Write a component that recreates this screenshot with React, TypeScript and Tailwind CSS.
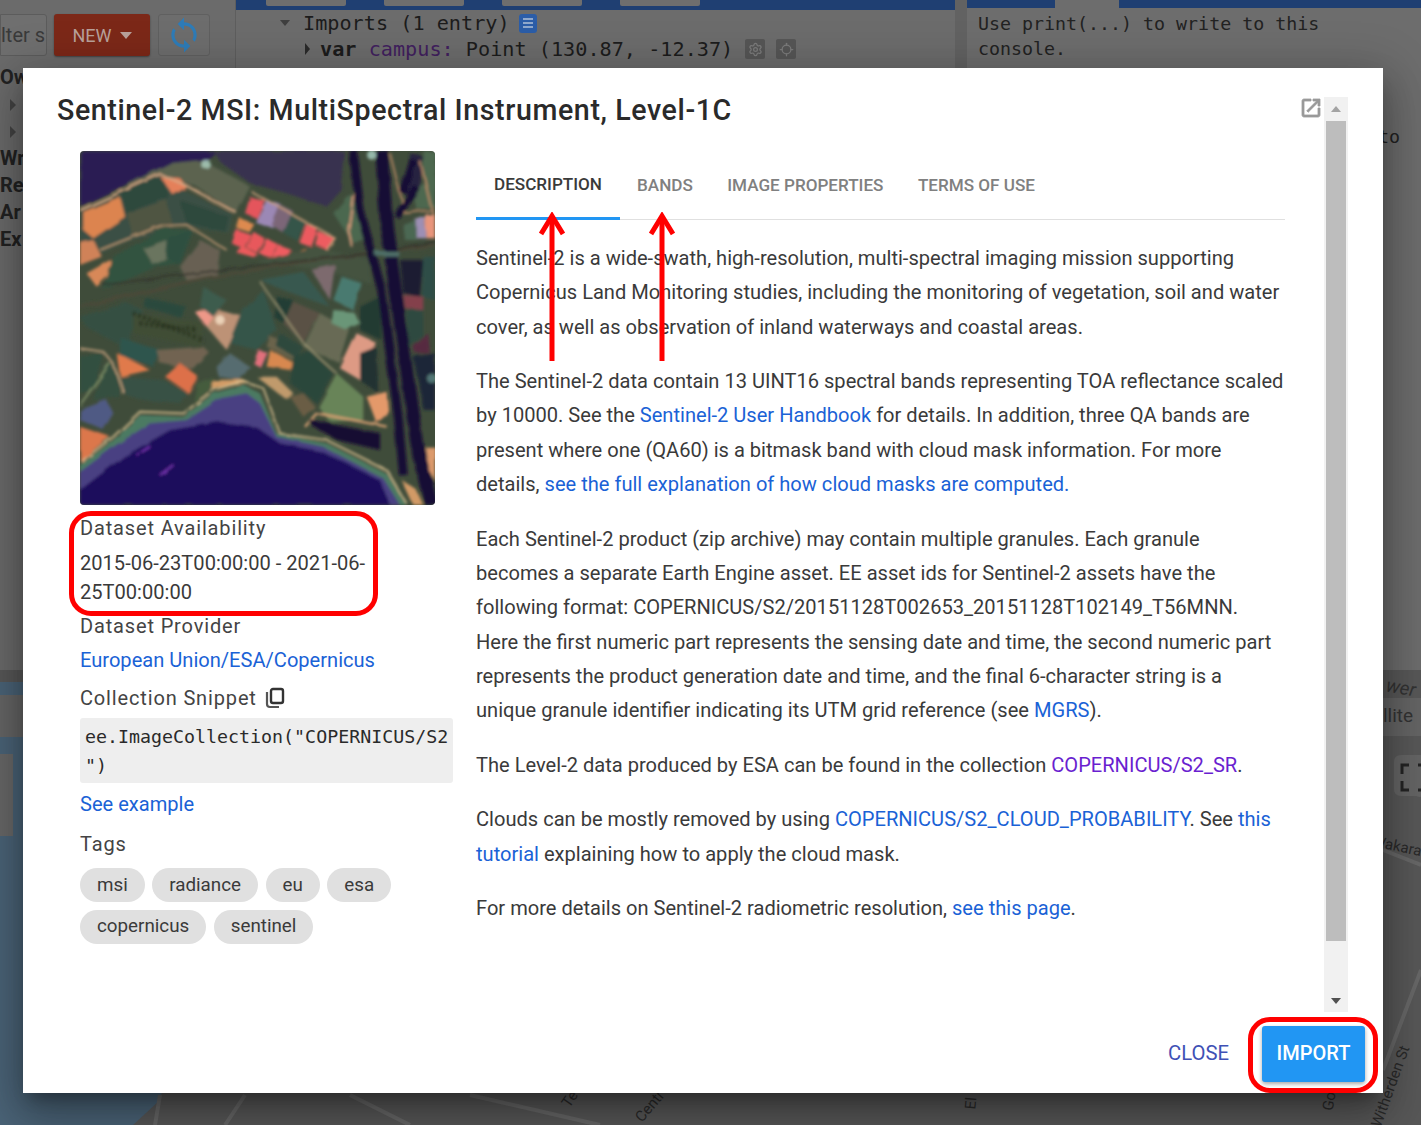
import { Settings, Locate } from 'lucide-react';

const fields: [string, string][] = [
  ['#2a1b52', '30,3 440,3 400,40 300,40 200,90 30,170'],
  ['#5c6350', '300,40 400,30 450,60 540,110 500,190 380,110 270,70 150,120 200,90'],
  ['#38304f', '430,3 825,3 815,120 770,170 650,130 540,100 450,35'],
  ['#3a5044', '30,180 270,75 350,125 490,195 480,250 330,225 160,280 30,340'],
  ['#2f4a3e', '155,130 270,80 300,140 170,190'],
  ['#4f5443', '170,190 290,150 310,230 190,260'],
  ['#2f483d', '330,150 480,200 470,245 350,220'],
  ['#dc8450', '40,185 150,140 165,200 70,265 40,240'],
  ['#e4805a', '270,80 330,85 350,110 310,135'],
  ['#d08258', '30,280 70,270 95,320 30,345'],
  ['#d88858', '50,370 120,330 140,355 80,410'],
  ['#335241', '130,320 280,235 370,240 330,340 260,350 100,420'],
  ['#6b755f', '220,295 290,270 295,325 250,345'],
  ['#2d4f41', '290,270 370,235 330,345 285,320'],
  ['#686153', '330,350 390,270 450,300 440,380 350,390'],
  ['#e4545c', '540,140 585,150 560,205 525,190'],
  ['#9b88b5', '590,150 635,165 610,235 555,215'],
  ['#7c6678', '630,165 670,185 640,250 605,225'],
  ['#e9565c', '500,240 545,255 525,300 485,280'],
  ['#e8585c', '550,245 585,265 560,310 530,295'],
  ['#ee5a5e', '590,265 625,285 600,320 565,310'],
  ['#ec5a5c', '520,290 565,315 555,325 500,310'],
  ['#ee5c60', '625,285 665,300 640,330 605,320'],
  ['#ec5a5e', '705,220 745,235 725,290 685,275'],
  ['#ee5c60', '745,245 795,265 770,300 735,285'],
  ['#345448', '665,190 705,215 680,270 640,250'],
  ['#dd8a50', '510,205 550,220 535,245 500,235'],
  ['#e88a50', '655,320 700,295 760,305 680,335'],
  ['#445341', '560,335 730,290 900,330 900,400 760,360'],
  ['#7d6a6e', '725,360 795,345 780,450'],
  ['#4a7a6f', '815,380 875,400 850,480 790,450'],
  ['#38594f', '570,390 700,365 780,470 640,420'],
  ['#213e34', '620,440 670,450 640,520 610,500'],
  ['#5a5145', '670,455 750,490 700,580 640,520'],
  ['#676b54', '750,490 840,540 810,640 700,590'],
  ['#6a9678', '790,480 850,485 870,520 830,540 785,520'],
  ['#dd9a84', '860,550 915,575 870,690 810,655'],
  ['#213a33', '870,470 930,440 935,570 870,540'],
  ['#213131', '870,610 920,590 925,730 870,690'],
  ['#345043', '30,500 170,460 220,480 160,590 50,530'],
  ['#2b4a3e', '225,440 350,470 330,500 220,470'],
  ['#404d36', '190,490 400,520 390,590 190,550'],
  ['#ee9888', '375,485 450,480 445,530 410,530'],
  ['#bd9276', '445,480 520,500 470,600 410,530'],
  ['#365449', '520,480 580,420 620,540 560,600 480,580'],
  ['#2f554d', '150,560 270,600 250,650 150,620'],
  ['#3d5b4d', '400,410 470,450 430,500 390,470'],
  ['#716451', '260,600 400,590 420,610 370,660 270,640'],
  ['#dd7048', '285,680 330,640 385,680 355,730'],
  ['#e07a4c', '140,610 240,660 150,680'],
  ['#395145', '150,680 280,690 350,730 330,760 220,750 160,730'],
  ['#566c70', '440,650 480,610 540,650 510,690 445,680'],
  ['#e2707c', '565,600 590,605 570,650 550,640'],
  ['#d88850', '600,600 675,640 660,660 590,650'],
  ['#6b644b', '600,560 690,590 670,630 590,590'],
  ['#2e4a3e', '630,550 700,590 680,625 620,590'],
  ['#2a463b', '670,620 720,600 790,670 740,760 660,700'],
  ['#c09a6c', '560,680 620,680 670,730 650,750'],
  ['#6b5d44', '660,740 700,730 735,770 700,800'],
  ['#d29c66', '425,690 520,690 540,700 425,715'],
  ['#445b3e', '380,700 430,680 420,720 370,760'],
  ['#688458', '800,670 880,740 880,810 780,815 745,770'],
  ['#e4996a', '890,740 950,725 955,790 920,820'],
  ['#314f3f', '30,620 100,610 70,720 30,730'],
  ['#505a84', '30,780 110,750 130,790 100,840 30,810'],
  ['#344f3f', '100,650 135,640 150,740 70,750'],
  ['#dc774c', '30,830 120,860 60,910 40,940 30,930'],
  ['#1a1a32', '990,330 1060,330 1050,440 1000,430'],
  ['#2e4d47', '1060,320 1095,320 1095,450 1055,440'],
  ['#84404c', '1000,435 1060,440 1060,480 1005,475'],
  ['#2d4941', '1010,480 1060,480 1060,560 1020,590'],
  ['#562a40', '1030,590 1075,550 1080,610 1035,610'],
  ['#1b2638', '1030,620 1095,610 1095,780 1060,780'],
  ['#9d8fb4', '1035,210 1065,200 1070,265 1040,265'],
  ['#e8957c', '1065,195 1095,190 1095,265 1070,265'],
  ['#4b6753', '1000,225 1040,210 1040,270 1005,270'],
  ['#4b684f', '840,130 900,260 850,280 790,190 830,140'],
  ['#25203f', '1020,10 1060,20 1050,110 1010,130'],
  ['#4d684f', '1060,3 1095,3 1095,170 1040,180 1030,130 1060,100'],
  ['#dc9a6c', '1065,890 1095,890 1095,990 1075,960'],
  ['#d29a66', '995,990 1040,1020 1060,1065 1030,1065'],
];

const lines: [string, number, string][] = [
  ['#d8a884', 6, 'M30,180 L270,72 L345,105 L500,190'],
  ['#bc9672', 5, 'M90,300 L270,228 L350,225 L470,300'],
  ['#c79c78', 5, 'M545,125 L795,265 L770,300'],
  ['#4c4838', 9, 'M30,470 L400,385 L700,335 L1095,285'],
  ['#33332a', 5, 'M100,405 L530,350 L900,310 L1095,275'],
  ['#a69e7a', 4, 'M570,395 L700,580 L800,670'],
  ['#cca682', 5, 'M30,595 L100,605 L130,640 L160,730'],
  ['#84956a', 5, 'M30,765 L120,640'],
  ['#d8c090', 5, 'M35,935 L130,860 L210,785 L340,790 L430,720 L520,695 L580,715 L630,850 L770,870 L950,960 L1010,1060'],
  ['#d69f72', 7, 'M705,830 L740,790 L950,830'],
  ['#d69a7a', 6, 'M850,130 L835,240 L845,290'],
  ['#c08c68', 5, 'M1050,30 L1090,200'],
  ['#c08c68', 5, 'M960,10 L1005,190 L1090,180'],
];

function Satellite() {
  return (
    <svg viewBox="30 3 1065 1062" className="block h-[354px] w-[355px] rounded-[4px]">
      <defs>
        <filter id="soft" x="0" y="0" width="100%" height="100%">
          <feTurbulence type="fractalNoise" baseFrequency="0.015" numOctaves="2" seed="4" result="warp" />
          <feDisplacementMap in="SourceGraphic" in2="warp" scale="12" result="moved" />
          <feGaussianBlur in="moved" stdDeviation="4" />
        </filter>
      </defs>
      <rect x="30" y="3" width="1065" height="1062" fill="#3f4c3a" />
      <g filter="url(#soft)">
        {fields.map(([fill, points], i) => (
          <polygon key={i} fill={fill} points={points} />
        ))}
        {lines.map(([stroke, width, d], i) => (
          <path key={i} d={d} stroke={stroke} strokeWidth={width} fill="none" />
        ))}
        <path d="M30,945 L130,870 L210,795 L340,800 L430,730 L520,705 L570,730 L620,850 L770,880 L950,970 L1010,1065 L30,1065 Z" fill="#4c7a62" />
        <path d="M30,965 L130,890 L240,820 L350,810 L450,745 L530,730 L570,760 L620,860 L760,890 L940,985 L990,1065 L30,1065 Z" fill="#4a3f82" />
        <path d="M30,1020 L160,920 L300,840 L450,815 L560,830 L630,880 L760,905 L930,990 L960,1065 L30,1065 Z" fill="#1f0b5c" />
        <path d="M200,915 L240,890 M270,975 L310,945" stroke="#8a3ec8" strokeWidth="4" />
        <path d="M850,3 L870,180 L935,420 L985,800 L1000,975" stroke="#150d36" strokeWidth="26" fill="none" />
        <path d="M935,3 L950,230 L985,480 L1040,880 L1085,1065" stroke="#150d36" strokeWidth="38" fill="none" />
        <path d="M1000,130 L1030,30 M1040,110 L980,200" stroke="#150d36" strokeWidth="22" />
        <path d="M720,810 L930,850 L930,900 L800,870 L730,830 Z" fill="#141032" />
        <path d="M915,310 L985,310" stroke="#4f6f68" strokeWidth="14" />
        <circle cx="405" cy="40" r="14" fill="#b9e2d0" opacity="0.7" />
        <circle cx="905" cy="15" r="14" fill="#b9e6d8" opacity="0.7" />
        <circle cx="450" cy="510" r="14" fill="#f6e2c8" opacity="0.8" />
        <circle cx="1085" cy="685" r="14" fill="#88c4b0" opacity="0.5" />
        <path d="M190,490 L400,570 M210,520 L380,540" stroke="#26301f" strokeWidth="14" strokeDasharray="7 9" />
      </g>
    </svg>
  );
}

function Arrow({ className }: { className: string }) {
  return (
    <svg viewBox="0 0 26 150" className={className}>
      <path d="M13 149V4" stroke="#ff0000" strokeWidth="5" fill="none" />
      <path d="M2 22L13 4L24 22" stroke="#ff0000" strokeWidth="5" fill="none" />
    </svg>
  );
}

function CopyIcon() {
  return (
    <svg viewBox="0 0 20 22" className="h-[22px] w-5">
      <rect x="6" y="2" width="12" height="14" rx="2" stroke="#333" strokeWidth="2.4" fill="none" />
      <path d="M2 5V17C2 19 3 20 5 20H14" stroke="#555" strokeWidth="2.2" fill="none" />
    </svg>
  );
}

function Backdrop() {
  return (
    <div className="absolute inset-0 flex flex-col bg-[#5d5d5d]">
      <div className="flex h-[670px] bg-[#6b6b6b]">
        <div className="relative w-[236px] border-r border-[#5e5e5e] pt-[14px]">
          <div className="flex items-start">
            <div className="flex h-[42px] w-[47px] items-center overflow-hidden rounded-r-[3px] border border-[#5c5c5c] bg-[#6f6f6f] text-[20px] text-[#3a3a3a]">
              <span className="whitespace-nowrap">lter s</span>
            </div>
            <div className="ml-[7px] flex h-[42px] w-[96px] items-center justify-center gap-2 rounded-[3px] bg-[#7c2818] text-[18px] text-[#b9a19b] shadow-[0_1px_2px_rgba(0,0,0,0.4)]">
              NEW
              <span className="h-0 w-0 border-x-[6px] border-t-[7px] border-x-transparent border-t-[#b9a19b]" />
            </div>
            <div className="ml-2 flex h-[42px] w-[52px] items-center justify-center rounded-[3px] border border-[#606060] bg-[#6d6d6d]">
              <svg viewBox="0 0 24 24" className="h-[38px] w-[38px]" fill="#2e7cb8">
                <path d="M12 4V1L8 5l4 4V6c3.31 0 6 2.69 6 6 0 1.01-.25 1.97-.7 2.8l1.46 1.46C19.54 15.03 20 13.57 20 12c0-4.42-3.58-8-8-8zm0 14c-3.31 0-6-2.69-6-6 0-1.01.25-1.97.7-2.8L5.24 7.74C4.46 8.97 4 10.43 4 12c0 4.42 3.58 8 8 8v3l4-4-4-4v3z" />
              </svg>
            </div>
          </div>
          <div className="mt-[8px] text-[20px] leading-[27px] font-bold text-[#222]">Ow</div>
          <div className="ml-[10px] flex h-[27px] items-center">
            <span className="h-0 w-0 border-y-[6px] border-l-[6px] border-y-transparent border-l-[#444]" />
          </div>
          <div className="ml-[10px] flex h-[27px] items-center">
            <span className="h-0 w-0 border-y-[6px] border-l-[6px] border-y-transparent border-l-[#444]" />
          </div>
          <div className="text-[20px] leading-[27px] font-bold text-[#222]">Wr</div>
          <div className="text-[20px] leading-[27px] font-bold text-[#222]">Re</div>
          <div className="text-[20px] leading-[27px] font-bold text-[#222]">Ar</div>
          <div className="text-[20px] leading-[27px] font-bold text-[#222]">Ex</div>
        </div>
        <div className="w-[731px] border-r-[12px] border-[#626262] bg-[#6c6c6c]">
          <div className="flex h-[10px] gap-[38px] bg-[#1f3f72] pl-[30px]">
            <div className="h-[6px] w-[80px] rounded-b-[2px] bg-[#6e6e6e]" />
            <div className="h-[6px] w-[80px] rounded-b-[2px] bg-[#6e6e6e]" />
            <div className="h-[6px] w-[80px] rounded-b-[2px] bg-[#6e6e6e]" />
            <div className="h-[6px] w-[80px] rounded-b-[2px] bg-[#6e6e6e]" />
          </div>
          <div className="flex items-center gap-[9px] pl-[44px] font-['DejaVu_Sans_Mono',monospace] text-[20.2px] leading-[26px] text-[#1c1c1c]">
            <span className="h-0 w-0 border-x-[5px] border-t-[6px] border-x-transparent border-t-[#3f3f3f]" />
            <span className="ml-[4px]">Imports (1 entry)</span>
            <span className="flex h-[19px] w-[18px] flex-col items-center justify-center gap-[2px] rounded-[3px] bg-[#2b5da8]">
              <span className="h-[2px] w-[10px] bg-[#8fa8cc]" />
              <span className="h-[2px] w-[10px] bg-[#8fa8cc]" />
              <span className="h-[2px] w-[10px] bg-[#8fa8cc]" />
            </span>
          </div>
          <div className="flex items-center gap-[10px] pl-[69px] font-['DejaVu_Sans_Mono',monospace] text-[20.2px] leading-[26px] text-[#1c1c1c]">
            <span className="h-0 w-0 border-y-[6px] border-l-[5px] border-y-transparent border-l-[#2a2a2a]" />
            <span className="whitespace-pre">
              <b>var</b> <span className="text-[#41205e]">campus:</span> Point (130.87, -12.37)
            </span>
            <span className="ml-[2px] flex h-5 w-5 items-center justify-center rounded-[2px] bg-[#565656] text-[#7c7c7c]">
              <Settings size={15} />
            </span>
            <span className="ml-[1px] flex h-5 w-5 items-center justify-center rounded-[2px] bg-[#565656] text-[#7c7c7c]">
              <Locate size={15} />
            </span>
          </div>
        </div>
        <div className="flex-1 bg-[#6d6d6d]">
          <div className="flex h-[8px] justify-between bg-[#1f3f72]">
            <div className="ml-[88px] h-[8px] w-[64px] bg-[#6d6d6d]" />
          </div>
          <div className="pt-[3px] pl-[11px] font-['DejaVu_Sans_Mono',monospace] text-[18.3px] leading-[25px] text-[#222]">
            Use print(...) to write to this
            <br />
            console.
          </div>
          <div className="mt-[63px] pr-[21px] text-right font-['DejaVu_Sans_Mono',monospace] text-[18.3px] leading-[25px] text-[#222]">
            to
          </div>
        </div>
      </div>
      <div className="relative flex-1 overflow-hidden bg-[#585858]">
        <svg viewBox="0 0 1421 455" className="absolute inset-0 h-full w-full">
          <path d="M0 12H260L160 430L133 455H0Z" fill="#4b6478" />
          <path d="M155 455L160 425M225 455L245 425M410 455L350 425M600 455L470 425" stroke="#686868" strokeWidth="4" fill="none" />
          <path d="M1383 180L1421 195M1395 120L1421 125M1383 400L1421 300" stroke="#686868" strokeWidth="4" fill="none" />
          <path d="M1383 28H1421V66H1383Z" fill="#656565" />
          <path d="M0 25H23V67H0Z" fill="#666666" />
          <path d="M0 84H13V166H0Z" fill="#686868" />
          <path d="M1394 92Q1394 85 1401 85H1421V126H1401Q1394 126 1394 119Z" fill="#656565" />
          <path d="M1409 95H1402V104M1402 111V120H1409M1418 95H1421M1418 120H1421" stroke="#242424" strokeWidth="3" fill="none" />
        </svg>
        <div className="absolute top-[4px] left-[1386px] rotate-[10deg] text-[19px] whitespace-nowrap text-[#333] italic">wer</div>
        <div className="absolute top-[32px] left-[1383px] text-[19px] whitespace-nowrap text-[#333]">llite</div>
        <div className="absolute top-[165px] left-[1372px] rotate-[12deg] text-[15px] whitespace-nowrap text-[#2a2a2a]">Wakara</div>
        <div className="absolute top-[405px] left-[1348px] -rotate-[70deg] text-[15px] whitespace-nowrap text-[#2a2a2a]">Witherden St</div>
        <div className="absolute top-[420px] left-[1320px] -rotate-[80deg] text-[15px] whitespace-nowrap text-[#2a2a2a]">Go</div>
        <div className="absolute top-[418px] left-[562px] -rotate-[55deg] text-[15px] whitespace-nowrap text-[#2a2a2a]">Te</div>
        <div className="absolute top-[425px] left-[632px] -rotate-[50deg] text-[15px] whitespace-nowrap text-[#2a2a2a]">Centr</div>
        <div className="absolute top-[422px] left-[965px] -rotate-[85deg] text-[15px] whitespace-nowrap text-[#2a2a2a]">El</div>
      </div>
    </div>
  );
}

const link = 'text-[#1a62d6]';
const label = 'text-[20px] leading-[28px] tracking-[0.85px] text-[#444]';
const chip = 'flex h-[34px] items-center rounded-full bg-[#e0e0e0] px-[17px] text-[18.8px] text-[#3a3a3a]';

export default function App() {
  return (
    <div className="relative h-[1125px] w-[1421px] overflow-hidden font-['Roboto',sans-serif]">
      <Backdrop />
      <div className="absolute top-[68px] left-[23px] flex h-[1025px] w-[1360px] flex-col bg-white shadow-[0_11px_15px_-7px_rgba(0,0,0,0.3),0_24px_38px_3px_rgba(0,0,0,0.2),0_9px_46px_8px_rgba(0,0,0,0.2)]">
        <div className="flex h-[944px] pt-[29px] pl-[34px]">
          <div className="w-[1268px]">
            <div className="flex items-start justify-between">
              <h1 className="text-[28.6px] leading-[26px] font-medium tracking-[0.6px] text-[#2a2a2a]">
                Sentinel-2 MSI: MultiSpectral Instrument, Level-1C
              </h1>
              <svg viewBox="0 0 24 24" className="mt-[-1px] mr-[2px] h-6 w-6" fill="#999999" stroke="#999999" strokeWidth="0.8">
                <path d="M19 19H5V5h7V3H5c-1.11 0-2 .9-2 2v14c0 1.1.89 2 2 2h14c1.1 0 2-.9 2-2v-7h-2v7zM14 3v2h3.59l-9.83 9.83 1.41 1.41L19 6.41V10h2V3h-7z" />
              </svg>
            </div>
            <div className="mt-[28px] flex pl-[23px]">
              <div className="w-[373px] shrink-0">
                <Satellite />
                <div className={`mt-[9px] ${label}`}>Dataset Availability</div>
                <div className="mt-[7px] text-[20.08px] leading-[28.5px] text-[#3a3a3a]">
                  2015-06-23T00:00:00 - 2021-06-
                  <br />
                  25T00:00:00
                </div>
                <div className={`mt-[6px] ${label}`}>Dataset Provider</div>
                <div className={`mt-[6px] text-[20.08px] leading-[28px] ${link}`}>European Union/ESA/Copernicus</div>
                <div className={`mt-[10px] flex items-center gap-[8px] ${label}`}>
                  Collection Snippet
                  <CopyIcon />
                </div>
                <div className="mt-[6px] h-[65px] rounded-[3px] bg-[#eeeeee] px-[5px] py-[4px] font-['DejaVu_Sans_Mono',monospace] text-[18.3px] leading-[29px] text-[#2a2a2a]">
                  ee.ImageCollection("COPERNICUS/S2
                  <br />
                  ")
                </div>
                <div className={`mt-[7px] text-[20.08px] leading-[28px] ${link}`}>See example</div>
                <div className={`mt-[12px] ${label}`}>Tags</div>
                <div className="mt-[10px] flex flex-wrap gap-[7.5px]">
                  {['msi', 'radiance', 'eu', 'esa', 'copernicus', 'sentinel'].map((tag) => (
                    <span key={tag} className={chip}>
                      {tag}
                    </span>
                  ))}
                </div>
              </div>
              <div className="ml-[23px] w-[809px]">
                <div className="flex h-[69px] border-b border-[#e0e0e0] pt-[2px] text-[17.1px] font-medium text-[#808080]">
                  <div className="flex h-[67px] w-[144px] items-center justify-center border-b-[3px] border-[#2196f3] text-[#3a3a3a]">
                    DESCRIPTION
                  </div>
                  <div className="flex items-center px-[17px]">BANDS</div>
                  <div className="flex items-center px-[17.5px]">IMAGE PROPERTIES</div>
                  <div className="flex items-center px-[17px]">TERMS OF USE</div>
                </div>
                <div className="mt-[21px] flex flex-col gap-[20.3px] text-[20.08px] leading-[34.3px] text-[#3a3a3a]">
                  <p>
                    Sentinel-2 is a wide-swath, high-resolution, multi-spectral imaging mission supporting Copernicus
                    Land Monitoring studies, including the monitoring of vegetation, soil and water cover, as well as
                    observation of inland waterways and coastal areas.
                  </p>
                  <p>
                    The Sentinel-2 data contain 13 UINT16 spectral bands representing TOA reflectance scaled by 10000.
                    See the <span className={link}>Sentinel-2 User Handbook</span> for details. In addition, three QA
                    bands are present where one (QA60) is a bitmask band with cloud mask information. For more details,{' '}
                    <span className={link}>see the full explanation of how cloud masks are computed.</span>
                  </p>
                  <p>
                    Each Sentinel-2 product (zip archive) may contain multiple granules. Each granule becomes a separate
                    Earth Engine asset. EE asset ids for Sentinel-2 assets have the following format:
                    COPERNICUS/S2/20151128T002653_20151128T102149_T56MNN. Here the first numeric part represents the
                    sensing date and time, the second numeric part represents the product generation date and time, and
                    the final 6-character string is a unique granule identifier indicating its UTM grid reference (see{' '}
                    <span className={link}>MGRS</span>).
                  </p>
                  <p>
                    The Level-2 data produced by ESA can be found in the collection{' '}
                    <span className="text-[#6a1fd0]">COPERNICUS/S2_SR</span>.
                  </p>
                  <p>
                    Clouds can be mostly removed by using <span className={link}>COPERNICUS/S2_CLOUD_PROBABILITY</span>.
                    See <span className={link}>this tutorial</span> explaining how to apply the cloud mask.
                  </p>
                  <p>
                    For more details on Sentinel-2 radiometric resolution, <span className={link}>see this page</span>.
                  </p>
                </div>
              </div>
            </div>
          </div>
          <div className="ml-[-1px] flex h-[915px] w-[24px] flex-col items-center bg-[#f1f1f1]">
            <div className="flex h-[24px] items-center">
              <span className="h-0 w-0 border-x-[5.5px] border-b-[6px] border-x-transparent border-b-[#a3a3a3]" />
            </div>
            <div className="h-[820px] w-[20px] bg-[#bdbdbd]" />
            <div className="flex flex-1 items-end pb-[8px]">
              <span className="h-0 w-0 border-x-[5.5px] border-t-[6px] border-x-transparent border-t-[#505050]" />
            </div>
          </div>
        </div>
        <div className="flex flex-1 items-start justify-end gap-[33px] pr-[18px] pt-[14px]">
          <span className="mt-[14px] text-[20.3px] leading-[26px] text-[#3f51b5]">CLOSE</span>
          <span className="flex h-[56px] w-[103px] items-center justify-center rounded-[3px] bg-[#2196f3] pb-[2px] text-[20px] font-medium text-white shadow-[0_2px_4px_rgba(0,0,0,0.35)]">
            IMPORT
          </span>
        </div>
      </div>
      <div className="absolute top-[511px] left-[69px] h-[105px] w-[309px] rounded-[22px] border-[5px] border-[#ff0000]" />
      <div className="absolute top-[1017px] left-[1248px] h-[76px] w-[130px] rounded-[22px] border-[5px] border-[#ff0000]" />
      <Arrow className="absolute top-[212px] left-[539px] h-[150px] w-[26px]" />
      <Arrow className="absolute top-[212px] left-[649px] h-[150px] w-[26px]" />
    </div>
  );
}
